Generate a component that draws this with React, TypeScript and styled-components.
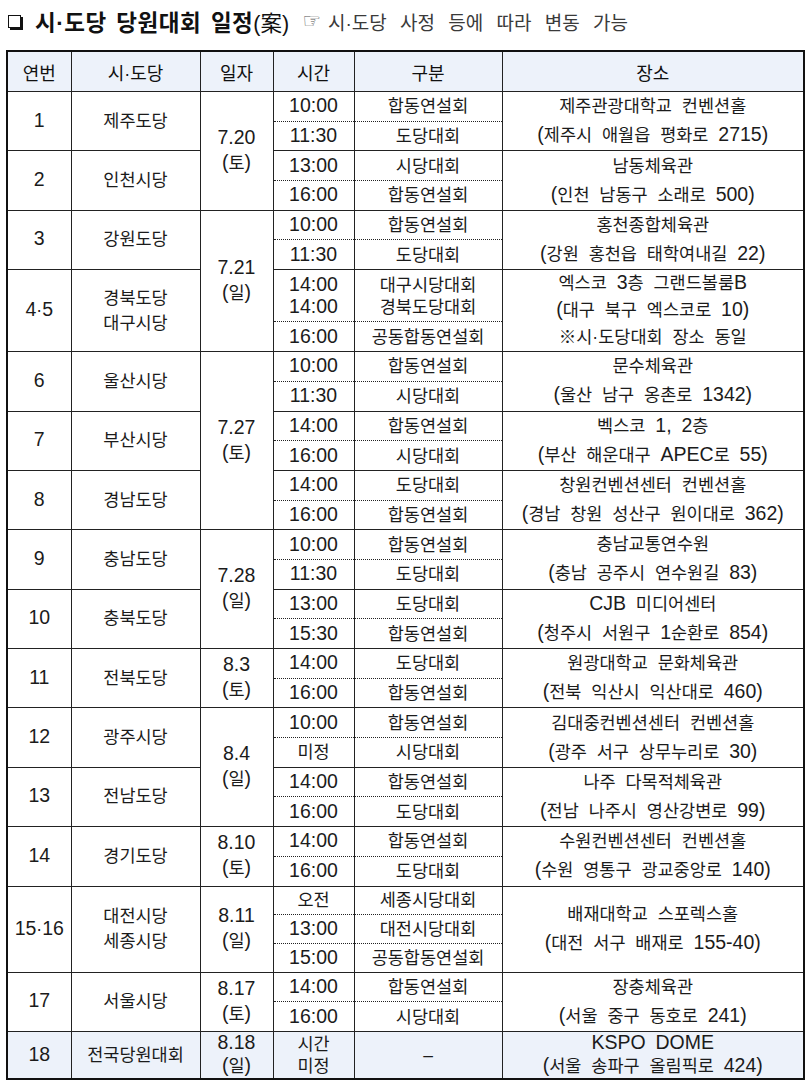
import React from 'react';
import styled, { createGlobalStyle } from 'styled-components';

const GlobalStyle = createGlobalStyle`
  html, body {
    margin: 0;
    padding: 0;
    background: #ffffff;
  }
`;

const Page = styled.div`
  width: 807px;
  padding: 0 0 0 6px;
  box-sizing: border-box;
  font-family: "Liberation Sans", "Noto Sans CJK KR", sans-serif;
  color: #1b1b1b;
`;

const Heading = styled.div`
  height: 42px;
  display: flex;
  align-items: center;
  padding-left: 2px;
  margin-bottom: 8px;
  white-space: nowrap;
`;

const Box = styled.span`
  width: 11px;
  height: 11px;
  border: 1.5px solid #111;
  box-shadow: 2px 2px 0 #111;
  margin-right: 14px;
  margin-top: 1px;
`;

const TitleMain = styled.span`
  font-family: "Liberation Sans", "Noto Sans CJK KR", sans-serif;
  font-weight: 700;
  font-size: 22.5px;
  letter-spacing: 0.5px;
  word-spacing: 3px;
  color: #111;
`;

const TitlePlan = styled.span`
  font-family: "Liberation Sans", "Noto Sans CJK KR", sans-serif;
  font-weight: 400;
  font-size: 21.5px;
  color: #111;
  margin-right: 13px;
`;

const Note = styled.span`
  font-family: "Liberation Sans", "Noto Sans CJK KR", sans-serif;
  font-weight: 400;
  font-size: 19px;
  word-spacing: 8px;
  color: #3a3a3a;
`;

const Hand = styled.span`
  font-family: "DejaVu Sans", sans-serif;
  font-size: 21px;
  margin-right: 7px;
  color: #555;
`;

const Table = styled.table`
  border-collapse: collapse;
  table-layout: fixed;
  width: 797px;
  border: 2px solid #111;
  font-size: 17.5px;
  word-spacing: 5px;
`;

const HeadCell = styled.th`
  height: 39px;
  padding: 0;
  border-left: 1px solid #222;
  border-bottom: 1px solid #222;
  background: #edf2fa;
  font-weight: 400;
  font-size: 18px;
  color: #111;
  text-align: center;
  vertical-align: middle;
`;

const Row = styled.tr<{ $h: number; $hl?: boolean }>`
  height: ${p => p.$h}px;
  background: ${p => (p.$hl ? '#edf2fa' : 'transparent')};
`;

const Cell = styled.td<{ $dotted?: boolean; $lh?: number }>`
  padding: 0;
  border-left: 1px solid #222;
  border-top: 1px ${p => (p.$dotted ? 'dotted' : 'solid')} #222;
  text-align: center;
  vertical-align: middle;
  line-height: ${p => p.$lh ?? 25}px;
  white-space: nowrap;
  overflow: hidden;
`;

const Latin = styled.span`
  font-size: 19.5px;
  line-height: 1;
`;

type Slot = { time: string[]; kind: string[]; h?: number };
type Group = {
  no: string;
  names: string[];
  date?: { d: string; w: string; groups: number };
  slots: Slot[];
  place: string[];
  placeLh?: number;
  hl?: boolean;
};

const two = (a: string, b: string, c: string, d: string): Slot[] => [
  { time: [a], kind: [b] },
  { time: [c], kind: [d] },
];

const groups: Group[] = [
  { no: '1', names: ['제주도당'], date: { d: '7.20', w: '(토)', groups: 2 }, slots: two('10:00', '합동연설회', '11:30', '도당대회'), place: ['제주관광대학교 컨벤션홀', '(제주시 애월읍 평화로 2715)'] },
  { no: '2', names: ['인천시당'], slots: two('13:00', '시당대회', '16:00', '합동연설회'), place: ['남동체육관', '(인천 남동구 소래로 500)'] },
  { no: '3', names: ['강원도당'], date: { d: '7.21', w: '(일)', groups: 2 }, slots: two('10:00', '합동연설회', '11:30', '도당대회'), place: ['홍천종합체육관', '(강원 홍천읍 태학여내길 22)'] },
  {
    no: '4·5',
    names: ['경북도당', '대구시당'],
    slots: [
      { time: ['14:00', '14:00'], kind: ['대구시당대회', '경북도당대회'], h: 52 },
      { time: ['16:00'], kind: ['공동합동연설회'], h: 30 },
    ],
    place: ['엑스코 3층 그랜드볼룸B', '(대구 북구 엑스코로 10)', '※시·도당대회 장소 동일'],
    placeLh: 27,
  },
  { no: '6', names: ['울산시당'], date: { d: '7.27', w: '(토)', groups: 3 }, slots: two('10:00', '합동연설회', '11:30', '시당대회'), place: ['문수체육관', '(울산 남구 옹촌로 1342)'] },
  { no: '7', names: ['부산시당'], slots: two('14:00', '합동연설회', '16:00', '시당대회'), place: ['벡스코 1, 2층', '(부산 해운대구 APEC로 55)'] },
  { no: '8', names: ['경남도당'], slots: two('14:00', '도당대회', '16:00', '합동연설회'), place: ['창원컨벤션센터 컨벤션홀', '(경남 창원 성산구 원이대로 362)'] },
  { no: '9', names: ['충남도당'], date: { d: '7.28', w: '(일)', groups: 2 }, slots: two('10:00', '합동연설회', '11:30', '도당대회'), place: ['충남교통연수원', '(충남 공주시 연수원길 83)'] },
  { no: '10', names: ['충북도당'], slots: two('13:00', '도당대회', '15:30', '합동연설회'), place: ['CJB 미디어센터', '(청주시 서원구 1순환로 854)'] },
  { no: '11', names: ['전북도당'], date: { d: '8.3', w: '(토)', groups: 1 }, slots: two('14:00', '도당대회', '16:00', '합동연설회'), place: ['원광대학교 문화체육관', '(전북 익산시 익산대로 460)'] },
  { no: '12', names: ['광주시당'], date: { d: '8.4', w: '(일)', groups: 2 }, slots: two('10:00', '합동연설회', '미정', '시당대회'), place: ['김대중컨벤션센터 컨벤션홀', '(광주 서구 상무누리로 30)'] },
  { no: '13', names: ['전남도당'], slots: two('14:00', '합동연설회', '16:00', '도당대회'), place: ['나주 다목적체육관', '(전남 나주시 영산강변로 99)'] },
  { no: '14', names: ['경기도당'], date: { d: '8.10', w: '(토)', groups: 1 }, slots: two('14:00', '합동연설회', '16:00', '도당대회'), place: ['수원컨벤션센터 컨벤션홀', '(수원 영통구 광교중앙로 140)'] },
  {
    no: '15·16',
    names: ['대전시당', '세종시당'],
    date: { d: '8.11', w: '(일)', groups: 1 },
    slots: [
      { time: ['오전'], kind: ['세종시당대회'], h: 28.7 },
      { time: ['13:00'], kind: ['대전시당대회'], h: 28.7 },
      { time: ['15:00'], kind: ['공동합동연설회'], h: 28.7 },
    ],
    place: ['배재대학교 스포렉스홀', '(대전 서구 배재로 155-40)'],
  },
  { no: '17', names: ['서울시당'], date: { d: '8.17', w: '(토)', groups: 1 }, slots: two('14:00', '합동연설회', '16:00', '시당대회'), place: ['장충체육관', '(서울 중구 동호로 241)'] },
  {
    no: '18',
    names: ['전국당원대회'],
    date: { d: '8.18', w: '(일)', groups: 1 },
    slots: [{ time: ['시간', '미정'], kind: ['–'], h: 48 }],
    place: ['KSPO DOME', '(서울 송파구 올림픽로 424)'],
    placeLh: 23,
    hl: true,
  },
];

// digits and latin letters are set a little larger, like the original hangul/latin mix
const Mixed = ({ text }: { text: string }) => (
  <>
    {text.split(/([0-9A-Za-z:.,()\-]+)/).map((part, i) =>
      /[0-9A-Za-z:.,()\-]/.test(part) ? <Latin key={i}>{part}</Latin> : part
    )}
  </>
);

const Lines = ({ items }: { items: string[] }) => (
  <>
    {items.map((t, i) => (
      <React.Fragment key={i}>
        {i > 0 && <br />}
        <Mixed text={t} />
      </React.Fragment>
    ))}
  </>
);

const App = () => {
  const rows: React.ReactNode[] = [];
  groups.forEach((g, gi) => {
    const dateSpan = g.date
      ? groups.slice(gi, gi + g.date.groups).reduce((n, x) => n + x.slots.length, 0)
      : 0;
    g.slots.forEach((s, si) => {
      rows.push(
        <Row key={`${gi}-${si}`} $h={s.h ?? 29.7} $hl={g.hl}>
          {si === 0 && (
            <>
              <Cell rowSpan={g.slots.length}>
                <Mixed text={g.no} />
              </Cell>
              <Cell rowSpan={g.slots.length}>
                <Lines items={g.names} />
              </Cell>
            </>
          )}
          {si === 0 && g.date && (
            <Cell rowSpan={dateSpan} $lh={g.hl ? 23 : 25}>
              <Lines items={[g.date.d, g.date.w]} />
            </Cell>
          )}
          <Cell $dotted={si > 0} $lh={22}>
            <Lines items={s.time} />
          </Cell>
          <Cell $dotted={si > 0} $lh={22}>
            <Lines items={s.kind} />
          </Cell>
          {si === 0 && (
            <Cell rowSpan={g.slots.length} $lh={g.placeLh ?? 29}>
              <Lines items={g.place} />
            </Cell>
          )}
        </Row>
      );
    });
  });

  return (
    <Page>
      <GlobalStyle />
      <Heading>
        <Box />
        <TitleMain>시·도당 당원대회 일정</TitleMain>
        <TitlePlan>(案)</TitlePlan>
        <Hand>☞</Hand>
        <Note>시·도당 사정 등에 따라 변동 가능</Note>
      </Heading>
      <Table>
        <colgroup>
          <col style={{ width: 64 }} />
          <col style={{ width: 129 }} />
          <col style={{ width: 73 }} />
          <col style={{ width: 81 }} />
          <col style={{ width: 148 }} />
          <col style={{ width: 302 }} />
        </colgroup>
        <thead>
          <tr>
            <HeadCell>연번</HeadCell>
            <HeadCell>시·도당</HeadCell>
            <HeadCell>일자</HeadCell>
            <HeadCell>시간</HeadCell>
            <HeadCell>구분</HeadCell>
            <HeadCell>장소</HeadCell>
          </tr>
        </thead>
        <tbody>{rows}</tbody>
      </Table>
    </Page>
  );
};

export default App;
